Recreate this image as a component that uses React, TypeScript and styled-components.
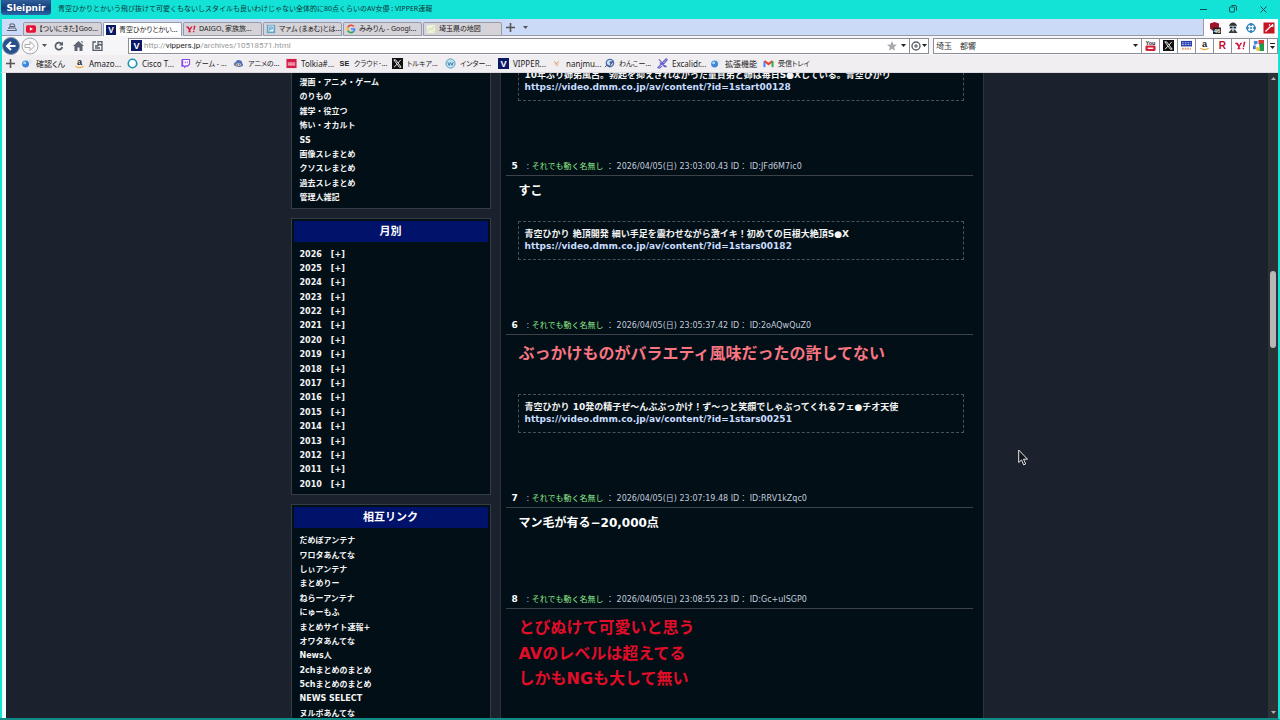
import React from "react";
import styled, { createGlobalStyle } from "styled-components";

const teal = "#12e3d6";
const uiFont = '"Noto Sans", "Noto Sans CJK JP", sans-serif';
const pageFont = '"DejaVu Sans", "Noto Sans CJK JP", sans-serif';

const Global = createGlobalStyle`
  * { box-sizing: border-box; }
  body { margin: 0; background: #1c222d; overflow: hidden; }
  button { font: inherit; color: inherit; background: none; border: 0; padding: 0; margin: 0; }
  a { color: inherit; text-decoration: none; }
  svg { display: block; flex: none; }
`;

const Browser = styled.div`
  display: flex;
  flex-direction: column;
  height: 100vh;
  border-right: 2px solid ${teal};
  border-bottom: 2px solid #118a86;
  font: 8px/12px ${uiFont};
  font-feature-settings: "palt";
  color: #222;
`;

const TitleBar = styled.header`
  display: flex;
  flex: none;
  height: 19px;
  background: ${teal};
`;
const Brand = styled.button`
  align-self: flex-start;
  width: 50px;
  height: 15px;
  margin-left: 1px;
  border-radius: 0 0 3px 3px;
  background: linear-gradient(#2f5f9a, #123c78 55%, #2c68aa);
  color: #fff;
  font: bold 9px/14px "DejaVu Sans", sans-serif;
`;
const PageTitle = styled.h1`
  flex: 1;
  margin: 0 0 0 7px;
  font: 7px/18px ${uiFont};
  color: #0c3536;
  white-space: nowrap;
  overflow: hidden;
`;
const WindowButton = styled.button`
  display: grid;
  place-items: center;
  width: 30px;
  height: 18px;
  color: #0d4f50;
`;

const TabStrip = styled.nav`
  display: flex;
  flex: none;
  height: 17px;
  border-left: 2px solid ${teal};
  background: #cbdaf6;
`;
const TabMenu = styled.button`
  display: grid;
  place-items: center;
  width: 20px;
  border-bottom: 1px solid #9a9aa6;
`;
const Tab = styled.button<{ $active?: boolean }>`
  display: flex;
  align-items: center;
  gap: 3px;
  width: 79px;
  height: 14px;
  margin: 3px 0 0 1px;
  padding-left: 2px;
  border: 1px solid #9a9aa6;
  border-bottom-width: ${(p) => (p.$active ? 0 : 1)}px;
  border-radius: 2px 2px 0 0;
  background: ${(p) => (p.$active ? "#fff" : "#d5d3d8")};
  font-size: 7px;
  white-space: nowrap;
`;
const TabSpace = styled.div`
  display: flex;
  flex: 1;
  align-items: center;
  gap: 8px;
  padding-left: 4px;
  border-bottom: 1px solid #9a9aa6;
  border-right: 1px solid #9a9aa6;
`;
const Extensions = styled.div`
  display: flex;
  align-items: center;
  gap: 6px;
  padding: 0 3px 0 5px;
  background: #fdfdff;
`;

const AddressRow = styled.div`
  display: flex;
  flex: none;
  align-items: center;
  height: 19px;
  border-left: 2px solid ${teal};
  background: #f6f5f8;
`;
const NavButtons = styled.div`
  display: flex;
  align-items: center;
  gap: 1px;
  width: 126px;
`;
const NavButton = styled.button<{ $wide?: boolean }>`
  display: grid;
  place-items: center;
  width: ${(p) => (p.$wide ? 18 : 9)}px;
  height: 18px;
`;
const Field = styled.div<{ $fixed?: boolean }>`
  display: flex;
  align-items: center;
  flex: ${(p) => (p.$fixed ? "0 1 209px" : "1 1 0")};
  height: 16px;
  margin-right: ${(p) => (p.$fixed ? 0 : 4)}px;
  padding-left: 2px;
  border: 1px solid #8f8f9a;
  background: #fff;
`;
const Address = styled.div`
  flex: 1;
  padding-left: 2px;
  color: #999;
  font-family: Roboto, sans-serif;
  white-space: nowrap;
  b { font-weight: normal; color: #222; }
`;
const SearchInput = styled.input`
  flex: 1;
  min-width: 0;
  border: 0;
  padding: 0;
  outline: 0;
  background: none;
  color: #333;
  font: 8px/12px ${uiFont};
`;
const FieldButton = styled.button<{ $framed?: boolean }>`
  display: flex;
  align-items: center;
  justify-content: center;
  gap: 1px;
  height: 14px;
  min-width: 11px;
  padding: 0 1px;
  border-left: ${(p) => (p.$framed ? "1px solid #8f8f9a" : "0")};
`;
const Engine = styled.button<{ $slim?: boolean }>`
  display: grid;
  place-items: center;
  width: ${(p) => (p.$slim ? 10 : 18)}px;
  height: 16px;
  border: 1px solid #8f8f9a;
  border-left: 0;
  background: #fff;
`;

const Bookmarks = styled.nav`
  display: flex;
  flex: none;
  align-items: center;
  height: 18px;
  border-left: 2px solid ${teal};
  border-bottom: 1px solid #dcd9e0;
  background: #f1eef2;
`;
const AddBookmark = styled.button`
  display: grid;
  place-items: center;
  width: 17px;
  height: 17px;
  margin-right: 2px;
`;
const Bookmark = styled.a<{ $small?: boolean }>`
  display: flex;
  align-items: center;
  gap: 4px;
  width: 53px;
  font-size: ${(p) => (p.$small ? 7 : 8)}px;
  white-space: nowrap;
`;

const Viewport = styled.div`
  display: flex;
  flex: 1;
  min-height: 0;
  border-left: 2px solid ${teal};
`;
const LeftEdge = styled.div`
  width: 4px;
  background: #f2ffff;
`;
const Scroller = styled.div`
  flex: 1;
  overflow: hidden;
  background: #1c222d;
  font-family: ${pageFont};
  font-feature-settings: normal;
  color: #f4f4f4;
`;
const Columns = styled.div`
  display: flex;
  gap: 9px;
  width: 693px;
  max-width: 100%;
  margin: -12px auto 0;
`;
const Sidebar = styled.aside`
  display: flex;
  flex-direction: column;
  flex: 0 0 200px;
  gap: 9px;
  padding-top: 6px;
`;
const Panel = styled.section`
  padding: 2px;
  border: 1px solid #343c45;
  background: #020f17;
`;
const PanelTitle = styled.h2`
  margin: 0;
  background: #00126a;
  color: #fff;
  font: bold 11px/21px ${pageFont};
  text-align: center;
`;
const PanelList = styled.ul`
  margin: 6px 0 0;
  padding: 0 6px;
  list-style: none;
  font-size: 8px;
  font-weight: bold;
  line-height: 1.8;
`;
const Year = styled.li`
  display: flex;
  gap: 9px;
`;
const Toggle = styled.button`
  font-weight: bold;
`;

const Thread = styled.main`
  flex: 1;
  min-width: 0;
  padding: 0 10px 0 5px;
  border: 1px solid #2b343e;
  border-width: 0 1px;
  background: #020f17;
`;
const Post = styled.article`
  padding-bottom: 38px;
`;
const PostHeader = styled.header`
  display: flex;
  align-items: baseline;
  height: 19px;
  padding-left: 6px;
  border-bottom: 1px solid #3c4247;
  color: #c4cbdc;
  font-size: 8px;
  line-height: 19px;
  white-space: pre;
`;
const Num = styled.b`
  width: 15px;
  color: #fff;
  font-size: 9px;
`;
const Name = styled.span`
  color: #8fe88a;
`;
const Body = styled.div<{ $size: number; $color: string }>`
  padding: 6px 0 1.6em 13px;
  color: ${(p) => p.$color};
  font-size: ${(p) => p.$size}px;
  font-weight: bold;
  line-height: 1.6;
`;
const LinkBox = styled.div`
  margin: 1px 9px 18px 12px;
  padding: 6px 6px 7px;
  border: 1px dashed #49525b;
  font-size: 9px;
  font-weight: bold;
  line-height: 12px;
`;
const Url = styled.a`
  display: block;
  color: #c9dcff;
`;

const ScrollTrack = styled.div`
  display: flex;
  flex-direction: column;
  align-items: center;
  width: 10px;
  padding: 4px 0;
  background: #2c3336;
`;
const Thumb = styled.div`
  width: 6px;
  height: 12%;
  border-radius: 3px;
  background: #bab6b8;
`;
const ThumbOffset = styled.div`
  height: 30%;
`;
const Spacer = styled.div`
  flex: 1;
`;
const Pointer = styled.svg`
  position: fixed;
  left: 1018px;
  top: 449px;
  pointer-events: none;
`;

const Caret = ({ color = "#222", up }: { color?: string; up?: boolean }) => (
  <svg width="5" height="3" viewBox="0 0 5 3"><path d={up ? "M0 3h5L2.5 0z" : "M0 0h5L2.5 3z"} fill={color} /></svg>
);
const Plus = () => (
  <svg width="9" height="9" viewBox="0 0 9 9"><path d="M4.5 0v9M0 4.5h9" stroke="#555" strokeWidth="1.6" /></svg>
);

const lettering = (letter: string, bg: string, fg: string, size = 10) => (
  <>
    <rect width="12" height="12" fill={bg} />
    <text x="6" y="9.5" textAnchor="middle" fontSize={size} fontWeight="bold" fill={fg} fontFamily="Liberation Sans, sans-serif">{letter}</text>
  </>
);
const globe = (
  <>
    <circle cx="5" cy="6.5" r="3.8" fill="#3f86d8" />
    <circle cx="4" cy="5.2" r="1.7" fill="#a9d2f8" />
    <path d="M7 1.5h3l1.5 1.5v3H9z" fill="#dde5ee" />
  </>
);
const art: Record<string, React.ReactNode> = {
  youtube: <><rect y="1.5" width="12" height="9" rx="2" fill="#e8113a" /><path d="M4.6 3.8 8.4 6 4.6 8.2z" fill="#fff" /></>,
  v: lettering("V", "#0a1866", "#fff"),
  yahoo: <><path d="M0 3h3l1.5 2.6L6 3h2L5.2 7.2V9H6v1H2.6V9h.8V7.2L1 4H0z" fill="#d8123c" /><path d="M9.5 2h2L10 7.5H8.7zM8.3 8.5h1.6V10H8.3z" fill="#d8123c" /></>,
  pixiv: <><rect x="1" y="1" width="10" height="10" fill="#5fa7cc" /><rect x="3" y="2" width="6" height="7" fill="#e7f5fb" /><path d="M4.5 8V3.5h3V6h-3" stroke="#3d8cb8" fill="none" /></>,
  google: <g fill="none" strokeWidth="2"><path d="M9.4 3A4.3 4.3 0 0 0 2.2 4" stroke="#e94335" /><path d="M2.2 4a4.3 4.3 0 0 0 0 4" stroke="#fbbc05" /><path d="M2.2 8a4.3 4.3 0 0 0 6.6 1.3" stroke="#34a853" /><path d="M8.8 9.3A4.3 4.3 0 0 0 10.3 6H6" stroke="#4285f4" /></g>,
  map: <><rect x="1" y="1" width="10" height="10" fill="#edf3dc" /><path d="M2 9 5 5l2 2 3-5" stroke="#bcd69a" fill="none" /><path d="M8 8h2v2H8z" fill="#f3dfa0" /></>,
  globe,
  amazon: <><text x="6" y="8" textAnchor="middle" fontSize="10" fontWeight="bold" fill="#222" fontFamily="Liberation Sans, sans-serif">a</text><path d="M1.5 9q4.5 3 9 0" stroke="#efa928" strokeWidth="1.4" fill="none" /></>,
  cisco: <circle cx="6" cy="6" r="4.6" fill="#fff" stroke="#1b93b5" strokeWidth="1.8" />,
  twitch: <><path d="M2 1h9v6L8.5 9.5h-2L4.5 11.5v-2H1.5V3z" fill="#8a45ea" /><path d="M3.5 2.2h6.3v4.2L8.5 7.8H6.3L5 9V7.8H3.5z" fill="#fff" /><path d="M5.7 3.8v2M8 3.8v2" stroke="#8a45ea" /></>,
  anime: <><path d="M1 8q-.5-3 2-3.5Q4 1.500 7 2.500q3 0 3 3 1.500 1 .8 3Q6 11.500 1 8z" fill="#4c73b8" /><path d="M3 8q3 1.600 6 0V6.500q-3-1.500-6 0z" fill="#eac9b0" /><circle cx="4.600" cy="7.300" r=".6" fill="#222" /><circle cx="7.400" cy="7.300" r=".6" fill="#222" /></>,
  tolkia: <><rect x=".5" y="1" width="11" height="10" fill="#d51b48" /><path d="M2 5.500h8M2 7.500h8" stroke="#fff" /></>,
  se: <text x="6" y="9" textAnchor="middle" fontSize="8" fontWeight="bold" fill="#222" fontFamily="Liberation Sans, sans-serif">SE</text>,
  x: <><rect width="12" height="12" fill="#101010" /><path d="M2 2h2l6 8H8zM9.600 2 6.700 5.300M5.300 6.800 2.400 10" stroke="#fff" fill="none" /></>,
  wiki: <><circle cx="6" cy="6" r="5" fill="#c2e1ef" stroke="#4d9cc6" /><path d="M3 4.500 4.400 8 6 5l1.600 3L9 4.500" stroke="#2b78a8" fill="none" /></>,
  nan: <><path d="M3 2 6 5l3-3v5L7 9.500H5L3 7z" fill="#f0ddd0" /><path d="M4 4l3 4M8 4 6 6" stroke="#d49a80" fill="none" /></>,
  dog: <><circle cx="6.500" cy="5.500" r="4" fill="#d5e2f3" stroke="#4a6fae" strokeWidth="1.500" /><path d="M1 10q3-4 5-1l4-6" stroke="#333f60" fill="none" /><circle cx="7.500" cy="5" r="1.400" fill="#315ca8" /></>,
  excali: <path d="M1 10.500 8 3l2-2 1 1-2 2.500L3 11zM2 1.500 10.500 10M3 5l6 5" stroke="#6660c8" strokeWidth="1.300" fill="none" />,
  gmail: <g fill="none" strokeWidth="2.200"><path d="M1.600 10V3.500" stroke="#4285f4" /><path d="M1.600 3.200 6 6.700l4.400-3.500" stroke="#ea4335" /><path d="M10.400 10V3.500" stroke="#34a853" /></g>,
  youtubeBig: <><text x="6" y="5.500" textAnchor="middle" fontSize="6" fontWeight="bold" fill="#222" fontFamily="Liberation Sans, sans-serif">You</text><rect x=".5" y="6" width="11" height="6" rx="1.500" fill="#d0203a" /><path d="M3 9h6" stroke="#fff" strokeWidth="1.500" /></>,
  kakaku: <><rect x="0" y="1" width="12" height="6" fill="#2238a8" /><path d="M1 3h10M1 5h10" stroke="#c8d0ff" strokeDasharray="2 1" /><path d="M1 9.500h10" stroke="#e2a070" strokeWidth="2" strokeDasharray="2 1" /></>,
  rakuten: <text x="6" y="10" textAnchor="middle" fontSize="11" fontWeight="bold" fill="#c20b2f" fontFamily="Liberation Sans, sans-serif">R</text>,
  gcolor: <><path d="M1 1h4v4H1z" fill="#4a83e0" /><rect x="6" y="0" width="6" height="5" fill="#d93b3b" /><rect x="7" y="4" width="5" height="8" fill="#1f9a48" /><path d="M3 8h4v4H4z" fill="#f0c93a" /><path d="M0 6h3v4H0z" fill="#3e78d8" /><circle cx="5" cy="5.500" r="1.500" fill="#fff" /></>,
  shield: <><path d="M1 1.500 5.500 0 10 1.500v5L5.500 10 1 6.500z" fill="#a0152a" /><rect x="4" y="5.500" width="8" height="6.500" fill="#222" /><text x="8" y="11" textAnchor="middle" fontSize="6" fontWeight="bold" fill="#fff" fontFamily="Liberation Sans, sans-serif">46</text></>,
  agent: <><path d="M2 4q1-3.500 4-3.500T10 4z" fill="#333" /><rect x="2.500" y="3.800" width="7" height="3" fill="#a8c8d8" /><path d="M3 5.500h2.400M6.600 5.500H9" stroke="#222" strokeWidth="1.500" /><path d="M1.500 11 4 7.500h4L10.500 11z" fill="#3a3a42" /><path d="M5 7.500h2L6 10z" fill="#fff" /></>,
  target: <><circle cx="6" cy="6" r="4" fill="#e9f6ff" stroke="#2a80b8" strokeWidth="1.400" /><path d="M6 1v3M6 8v3M1 6h3M8 6h3" stroke="#2a80b8" strokeWidth="1.600" /><circle cx="6" cy="6" r="1" fill="#2a80b8" /></>,
  wand: <><rect x=".5" y=".5" width="11" height="11" fill="#c41422" /><path d="M2.500 9.500 8 4M9.500 2v2M10.500 4H8M6 2.500l1 1" stroke="#fff" strokeWidth="1.300" /></>,
};
const Icon = ({ name, size = 11 }: { name: string; size?: number }) => (
  <svg width={size} height={size} viewBox="0 0 12 12" aria-hidden="true">{art[name]}</svg>
);

const tabs: [string, string][] = [
  ["youtube", "【ついにきた】Goo..."],
  ["v", "青空ひかりとかい..."],
  ["yahoo", "DAIGO、家族旅..."],
  ["pixiv", "マァム (まぁむ)とは..."],
  ["google", "みみりん - Googl..."],
  ["map", "埼玉県の地図"],
];
const bookmarks: { icon: string; label: string; small?: boolean }[] = [
  { icon: "globe", label: "確認くん" },
  { icon: "amazon", label: "Amazo..." },
  { icon: "cisco", label: "Cisco T..." },
  { icon: "twitch", label: "ゲーム - ...", small: true },
  { icon: "anime", label: "アニメの...", small: true },
  { icon: "tolkia", label: "Tolkia#..." },
  { icon: "se", label: "クラウド･...", small: true },
  { icon: "x", label: "トルキア...", small: true },
  { icon: "wiki", label: "インター...", small: true },
  { icon: "v", label: "VIPPER..." },
  { icon: "nan", label: "nanjmu..." },
  { icon: "dog", label: "わんこー...", small: true },
  { icon: "excali", label: "Excalidr..." },
  { icon: "globe", label: "拡張機能" },
  { icon: "gmail", label: "受信トレイ", small: true },
];
const engines = ["youtubeBig", "x", "kakaku", "amazon", "rakuten", "yahoo", "gcolor"];
const categories = ["漫画・アニメ・ゲーム", "のりもの", "雑学・役立つ", "怖い・オカルト", "SS", "画像スレまとめ", "クソスレまとめ", "過去スレまとめ", "管理人雑記"];
const years = Array.from({ length: 17 }, (_, i) => 2026 - i);
const links = ["だめぽアンテナ", "ワロタあんてな", "しぃアンテナ", "まとめりー", "ねらーアンテナ", "にゅーもふ", "まとめサイト速報+", "オワタあんてな", "News人", "2chまとめのまとめ", "5chまとめのまとめ", "NEWS SELECT", "ヌルポあんてな"];

type Product = { title: string; id: string };
type PostData = { num: number; time: string; id: string; size: number; color: string; lines: string[]; product?: Product };
const posts: PostData[] = [
  { num: 5, time: "23:03:00.43", id: "JFd6M7ic0", size: 12, color: "#fff", lines: ["すこ"], product: { title: "青空ひかり 絶頂開発 細い手足を震わせながら激イキ！初めての巨根大絶頂S●X", id: "1stars00182" } },
  { num: 6, time: "23:05:37.42", id: "2oAQwQuZ0", size: 16, color: "#f87582", lines: ["ぶっかけものがバラエティ風味だったの許してない"], product: { title: "青空ひかり 10発の精子ぜ～んぶぶっかけ！ず～っと笑顔でしゃぶってくれるフェ●チオ天使", id: "1stars00251" } },
  { num: 7, time: "23:07:19.48", id: "RRV1kZqc0", size: 12, color: "#fff", lines: ["マン毛が有る−20,000点"] },
  { num: 8, time: "23:08:55.23", id: "Gc+uISGP0", size: 16, color: "#e00d28", lines: ["とびぬけて可愛いと思う", "AVのレベルは超えてる", "しかもNGも大して無い"] },
];

const ProductLink = ({ title, id }: Product) => {
  const url = `https://video.dmm.co.jp/av/content/?id=${id}`;
  return (
    <LinkBox>
      {title}
      <Url href={url}>{url}</Url>
    </LinkBox>
  );
};

export default function App() {
  return (
    <>
      <Global />
      <Browser>
        <TitleBar>
          <Brand>Sleipnir</Brand>
          <PageTitle>青空ひかりとかいう飛び抜けて可愛くもないしスタイルも良いわけじゃない全体的に80点くらいのAV女優 : VIPPER速報</PageTitle>
          <WindowButton aria-label="最小化"><svg width="7" height="7" viewBox="0 0 7 7"><path d="M0 3.500h7" stroke="currentColor" /></svg></WindowButton>
          <WindowButton aria-label="元に戻す"><svg width="8" height="8" viewBox="0 0 8 8" fill="none" stroke="currentColor"><rect x=".5" y="2" width="5" height="5" rx="1" /><path d="M2.500 .5H6a1.500 1.500 0 0 1 1.500 1.500v3.500" /></svg></WindowButton>
          <WindowButton aria-label="閉じる"><svg width="7" height="7" viewBox="0 0 7 7"><path d="m.5.5 6 6m0-6-6 6" stroke="currentColor" /></svg></WindowButton>
        </TitleBar>

        <TabStrip>
          <TabMenu aria-label="タブ一覧"><svg width="10" height="8" viewBox="0 0 10 8" fill="none" stroke="#56606e"><path d="M3 1h4l1 2.500H3zM1.500 6 3 3.500M0 7.500h9.500L8.500 5H1.500" /></svg></TabMenu>
          {tabs.map(([icon, label], i) => (
            <Tab key={label} $active={i === 1}><Icon name={icon} size={10} />{label}</Tab>
          ))}
          <TabSpace>
            <button aria-label="新しいタブ"><Plus /></button>
            <button aria-label="タブメニュー"><Caret color="#555" /></button>
          </TabSpace>
          <Extensions>
            {["shield", "agent", "target", "wand"].map((name) => (
              <button key={name} aria-label={name}><Icon name={name} size={12} /></button>
            ))}
          </Extensions>
        </TabStrip>

        <AddressRow>
          <NavButtons>
            <NavButton $wide aria-label="戻る"><svg width="18" height="18" viewBox="0 0 18 18"><circle cx="9" cy="9" r="8.500" fill="#27508c" stroke="#8795ad" /><path d="M13.500 9H5.500M9 5 5 9l4 4" stroke="#fff" strokeWidth="2" fill="none" /></svg></NavButton>
            <NavButton $wide aria-label="進む"><svg width="18" height="18" viewBox="0 0 18 18"><circle cx="9" cy="9" r="8" fill="#f8f8fa" stroke="#a5a5ae" /><path d="M4 7.500h5v-3L13.500 9 9 13.500v-3H4z" stroke="#aaa" fill="#fff" /></svg></NavButton>
            <NavButton aria-label="履歴"><Caret color="#555" /></NavButton>
            <NavButton $wide aria-label="更新"><svg width="10" height="10" viewBox="0 0 10 10"><path d="M7.800 3.200A3.500 3.500 0 1 0 8.300 6" stroke="#555c66" strokeWidth="1.700" fill="none" /><path d="M9 .5V4.500H5z" fill="#555c66" /></svg></NavButton>
            <NavButton $wide aria-label="ホーム"><svg width="11" height="10" viewBox="0 0 11 10"><path d="M5.500 0 11 5H9.500v5h-3V6.500h-2V10h-3V5H0zM8 0h1.500v3z" fill="#5d6570" /></svg></NavButton>
            <NavButton $wide aria-label="サイドバー"><svg width="11" height="10" viewBox="0 0 11 10" fill="none" stroke="#555c66" strokeWidth="1.300"><path d="M4 1H1v8.300h9V5M3 7h5M3 5h2.500M6 .7v4l2-1.500 2 1.500v-4z" /></svg></NavButton>
          </NavButtons>
          <Field>
            <Icon name="v" />
            <Address>http://<b>vippers.jp</b>/archives/10518571.html</Address>
            <FieldButton aria-label="お気に入り"><svg width="10" height="10" viewBox="0 0 10 10"><path d="m5 0 1.400 3.400 3.600.3-2.800 2.400.9 3.600L5 7.700 1.900 9.700l.9-3.600L0 3.700l3.600-.3z" fill="#a8a8ae" /></svg></FieldButton>
            <FieldButton aria-label="アドレス履歴"><Caret /></FieldButton>
            <FieldButton $framed aria-label="エンジン"><svg width="10" height="10" viewBox="0 0 10 10"><circle cx="5" cy="5" r="4" fill="none" stroke="#5d6069" strokeWidth="1.400" /><circle cx="5" cy="5" r="1.800" fill="#777b85" /></svg><Caret /></FieldButton>
          </Field>
          <Field $fixed>
            <SearchInput aria-label="検索" defaultValue="埼玉　都響" />
            <FieldButton aria-label="検索履歴"><Caret /></FieldButton>
          </Field>
          {engines.map((name) => (
            <Engine key={name} aria-label={name}><Icon name={name} /></Engine>
          ))}
          <Engine $slim aria-label="その他"><svg width="5" height="6" viewBox="0 0 5 6"><path d="M0 .5h5" stroke="#222" /><path d="M0 3h5L2.500 6z" fill="#222" /></svg></Engine>
        </AddressRow>

        <Bookmarks>
          <AddBookmark aria-label="ブックマークに追加"><Plus /></AddBookmark>
          {bookmarks.map(({ icon, label, small }) => (
            <Bookmark key={label} href="#" $small={small}><Icon name={icon} />{label}</Bookmark>
          ))}
        </Bookmarks>

        <Viewport>
          <LeftEdge />
          <Scroller>
            <Columns>
              <Sidebar>
                <Panel>
                  <PanelList>{categories.map((c) => <li key={c}><a href="#">{c}</a></li>)}</PanelList>
                </Panel>
                <Panel>
                  <PanelTitle>月別</PanelTitle>
                  <PanelList>{years.map((y) => <Year key={y}>{y}<Toggle>[+]</Toggle></Year>)}</PanelList>
                </Panel>
                <Panel>
                  <PanelTitle>相互リンク</PanelTitle>
                  <PanelList>{links.map((l) => <li key={l}><a href="#">{l}</a></li>)}</PanelList>
                </Panel>
              </Sidebar>
              <Thread>
                <Post>
                  <ProductLink title="10年ぶり姉弟風呂。勃起を抑えきれなかった童貞弟と姉は毎日S●Xしている。青空ひかり" id="1start00128" />
                </Post>
                {posts.map((p) => (
                  <Post key={p.num}>
                    <PostHeader>
                      <Num>{p.num}</Num>
                      <span>: </span>
                      <Name>それでも動く名無し</Name>
                      <span> ： 2026/04/05(日) {p.time} ID： ID:{p.id}</span>
                    </PostHeader>
                    <Body $size={p.size} $color={p.color}>
                      {p.lines.map((line) => <div key={line}>{line}</div>)}
                    </Body>
                    {p.product && <ProductLink {...p.product} />}
                  </Post>
                ))}
              </Thread>
            </Columns>
          </Scroller>
          <ScrollTrack>
            <Caret color="#b0b0b0" up />
            <ThumbOffset />
            <Thumb />
            <Spacer />
            <Caret color="#b0b0b0" />
          </ScrollTrack>
        </Viewport>
      </Browser>
      <Pointer width="10" height="17" viewBox="0 0 10 17" aria-hidden="true">
        <path d="M.7 1v12.500l2.800-2.600 2.200 5 2-1-2.200-4.700H9.500z" fill="#10151c" stroke="#e8e8e8" />
      </Pointer>
    </>
  );
}
